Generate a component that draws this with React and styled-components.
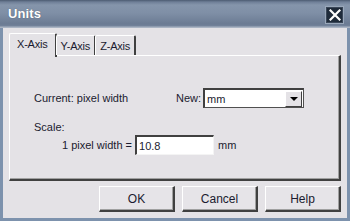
import React from 'react';
import styled, { createGlobalStyle } from 'styled-components';

const Global = createGlobalStyle`
  html, body { margin: 0; padding: 0; background: #7d92ad; }
  * { box-sizing: border-box; }
`;

const Window = styled.div`
  width: 350px;
  height: 221px;
  display: flex;
  flex-direction: column;
  background: #7d92ad;
  font-family: "Liberation Sans", Arial, sans-serif;
  font-size: 11px;
  color: #1b1b2f;
  overflow: hidden;
`;

const TitleBar = styled.div`
  height: 28px;
  flex: none;
  display: flex;
  align-items: center;
  justify-content: space-between;
  padding: 0 6px 1px 8px;
  background: linear-gradient(#4c5b71 0, #6f7f97 2px, #8595ab 5px, #7f8fa6 13px, #6b7b93 24px, #73839b 26px, #aab4c3 27px, #aab4c3 28px);
`;

const Title = styled.span`
  color: #fff;
  font-weight: bold;
  font-size: 13px;
  letter-spacing: 0.1px;
  text-shadow: 0 0 1px rgba(40, 50, 70, 0.6);
`;

const Close = styled.div`
  width: 19px;
  height: 18px;
  margin-top: 2px;
  display: flex;
  align-items: center;
  justify-content: center;
  background: #1f2b3a;
  border: 1px solid #9aa8ba;
  box-shadow: inset 0 0 0 1px #3a4759;
`;

const Body = styled.div`
  flex: 1;
  margin: 0 3px 3px 3px;
  background: #e4e2e6;
  padding: 5px 6px 0 6px;
  display: flex;
  flex-direction: column;
`;

const TabStrip = styled.div`
  display: flex;
  align-items: flex-end;
  height: 22px;
  position: relative;
  z-index: 1;
`;

const Tab = styled.div`
  height: ${p => (p.$active ? 24 : 20)}px;
  margin-bottom: ${p => (p.$active ? -2 : 0)}px;
  margin-left: ${p => (p.$active ? 0 : -1)}px;
  padding: 0 ${p => (p.$active ? 7 : 4)}px;
  display: flex;
  align-items: center;
  padding-bottom: ${p => (p.$active ? 3 : 0)}px;
  background: #e4e2e6;
  border-top: 1px solid #fff;
  border-left: 1px solid #fff;
  border-right: 2px solid #404040;
  border-radius: 2px 2px 0 0;
  letter-spacing: -0.2px;
`;

const Panel = styled.div`
  height: 126px;
  border-top: 1px solid #fff;
  border-left: 1px solid #fff;
  border-right: 2px solid #404040;
  border-bottom: 2px solid #404040;
  box-shadow: inset -1px -1px 0 #a0a0a0;
  padding: 32px 0 0 24px;
`;

const Row = styled.div`
  display: flex;
  align-items: center;
  height: 20px;
  padding-left: ${p => p.$indent || 0}px;
`;

const Label = styled.span`
  width: ${p => (p.$w ? `${p.$w}px` : 'auto')};
  margin-right: ${p => p.$mr || 0}px;
  margin-left: ${p => p.$ml || 0}px;
  white-space: nowrap;
`;

const ScaleLabel = styled.div`
  margin-top: 13px;
  line-height: 13px;
  height: 14px;
`;

const Field = styled.div`
  width: ${p => p.$w}px;
  height: 20px;
  background: #fff;
  border-top: 2px solid #404040;
  border-left: 2px solid #404040;
  border-right: 1px solid ${p => (p.$closed ? '#505050' : '#f4f4f4')};
  border-bottom: 1px solid ${p => (p.$closed ? '#505050' : '#f4f4f4')};
  display: flex;
  align-items: center;
  justify-content: space-between;
  padding-left: 2px;
  font-size: 11px;
`;

const DropButton = styled.div`
  width: 17px;
  height: 16px;
  margin-right: 1px;
  background: #e4e2e6;
  border-top: 1px solid #fff;
  border-left: 1px solid #fff;
  border-right: 1px solid #404040;
  border-bottom: 1px solid #404040;
  display: flex;
  align-items: center;
  justify-content: center;
  &::after {
    content: "";
    border-left: 4px solid transparent;
    border-right: 4px solid transparent;
    border-top: 4px solid #000;
  }
`;

const Buttons = styled.div`
  display: flex;
  justify-content: flex-end;
  gap: 7px;
  margin-top: 5px;
`;

const Button = styled.div`
  width: 76px;
  height: 26px;
  display: flex;
  align-items: center;
  justify-content: center;
  font-size: 12px;
  background: #e6e4e8;
  border-top: 1px solid #fff;
  border-left: 1px solid #fff;
  border-right: 2px solid #404040;
  border-bottom: 2px solid #404040;
  box-shadow: inset -1px -1px 0 #a0a0a0;
`;

export default function App() {
  return (
    <>
      <Global />
      <Window>
        <TitleBar>
          <Title>Units</Title>
          <Close>
            <svg width="12" height="12" viewBox="0 0 12 12">
              <path d="M1.5 1.5 L10.5 10.5 M10.5 1.5 L1.5 10.5" stroke="#fff" strokeWidth="2.2" strokeLinecap="square" />
            </svg>
          </Close>
        </TitleBar>
        <Body>
          <TabStrip>
            <Tab $active>X-Axis</Tab>
            <Tab>Y-Axis</Tab>
            <Tab>Z-Axis</Tab>
          </TabStrip>
          <Panel>
            <Row>
              <Label $w={142}>Current: pixel width</Label>
              <Label $mr={2}>New:</Label>
              <Field $w={101} $closed>
                <span>mm</span>
                <DropButton />
              </Field>
            </Row>
            <ScaleLabel>Scale:</ScaleLabel>
            <Row $indent={28}>
              <Label $mr={3}>1 pixel width =</Label>
              <Field $w={79}>10.8</Field>
              <Label $ml={4}>mm</Label>
            </Row>
          </Panel>
          <Buttons>
            <Button>OK</Button>
            <Button>Cancel</Button>
            <Button>Help</Button>
          </Buttons>
        </Body>
      </Window>
    </>
  );
}
